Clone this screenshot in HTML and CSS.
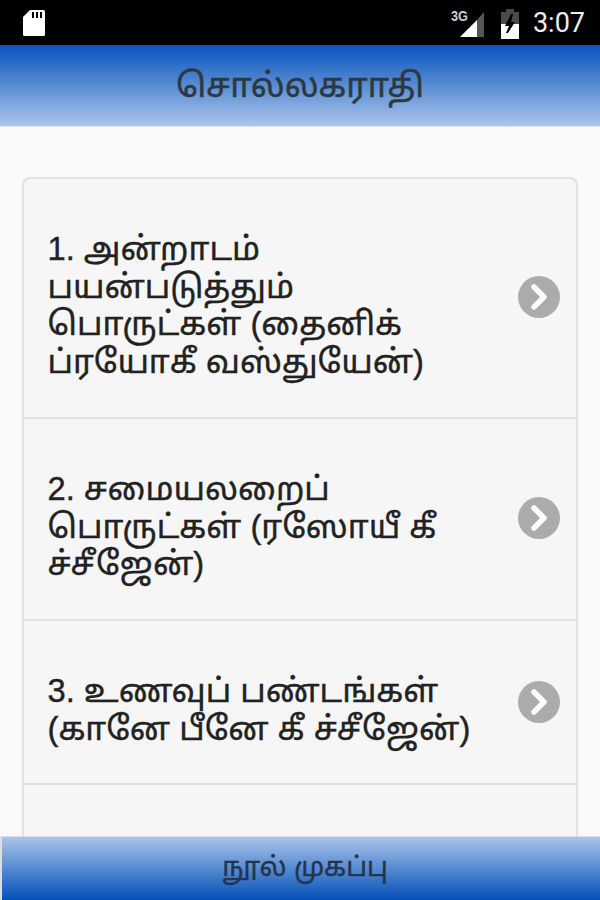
FILE: index.html
```html
<!DOCTYPE html>
<html lang="ta">
<head>
<meta charset="utf-8">
<title>சொல்லகராதி</title>
<link rel="stylesheet" href="styles.css">
</head>
<body>
<div class="status">
  <svg class="sd" width="24" height="28" viewBox="0 0 24 28"><path fill="#fff" d="M8 1H21.500Q23 1 23 2.500V25.500Q23 27 21.500 27H2.500Q1 27 1 25.500V8Z"/><path fill="#000" d="M10 3h2v6h-2zM14 3h2v6h-2zM18 3h2v6h-2z"/></svg>
  <div class="status-right">
    <svg class="signal" width="34" height="30" viewBox="0 0 34 30"><path fill="#fff" d="M9 28L26 11V28Z"/><path fill="#555" d="M26 11L33 3V28H26Z"/><text x="0" y="12" class="net" textLength="17" lengthAdjust="spacingAndGlyphs">3G</text></svg>
    <svg class="battery" width="20" height="30" viewBox="0 0 20 30"><path fill="#4a4a4a" d="M6 0H14V3H19V15H1V3H6Z"/><path fill="#fff" d="M1 15H19V30H1Z"/><path fill="#000" d="M11 5L5 17H9L6 24L8 24L15 13H11L13 5Z"/></svg>
    <span class="clock">3:07</span>
  </div>
</div>
<header class="head"><h1>சொல்லகராதி</h1></header>
<main class="content">
  <ul class="list">
    <li class="row"><span class="label">1. அன்றாடம் பயன்படுத்தும் பொருட்கள் (தைனிக் ப்ரயோகீ வஸ்துயேன்)</span><svg class="arrow" viewBox="0 0 42 42"><circle cx="21" cy="21" r="21" fill="#ababab"/><path d="M16 11L26 21L16 31" fill="none" stroke="#fff" stroke-width="5.500" stroke-linecap="round" stroke-linejoin="round"/></svg></li>
    <li class="row"><span class="label">2. சமையலறைப் பொருட்கள் (ரஸோயீ கீ ச்சீஜேன்)</span><svg class="arrow" viewBox="0 0 42 42"><circle cx="21" cy="21" r="21" fill="#ababab"/><path d="M16 11L26 21L16 31" fill="none" stroke="#fff" stroke-width="5.500" stroke-linecap="round" stroke-linejoin="round"/></svg></li>
    <li class="row"><span class="label">3. உணவுப் பண்டங்கள் (கானே பீனே கீ ச்சீஜேன்)</span><svg class="arrow" viewBox="0 0 42 42"><circle cx="21" cy="21" r="21" fill="#ababab"/><path d="M16 11L26 21L16 31" fill="none" stroke="#fff" stroke-width="5.500" stroke-linecap="round" stroke-linejoin="round"/></svg></li>
    <li class="row row-empty"></li>
  </ul>
</main>
<footer class="foot"><span>நூல் முகப்பு</span></footer>
</body>
</html>
```
FILE: styles.css
```css
* { box-sizing: border-box; }
html, body { margin: 0; padding: 0; }
body {
  width: 600px;
  height: 900px;
  overflow: hidden;
  display: flex;
  flex-direction: column;
  background: #f9f9f9;
  font-family: "Liberation Sans", "Noto Sans", "Noto Sans Tamil", sans-serif;
  color: #222;
}
.status {
  flex: 0 0 45px;
  height: 45px;
  background: #000;
  display: flex;
  align-items: center;
  justify-content: space-between;
  padding: 0 15px 0 22px;
}
.status-right { display: flex; align-items: center; }
.signal { margin-right: 15px; margin-top: 2px; overflow: visible; }
.net { font-family: "Liberation Sans", sans-serif; font-size: 14px; font-weight: 700; fill: #ccc; }
.battery { margin-right: 13px; margin-top: 2px; }
.clock { font-family: Roboto, sans-serif; font-size: 27px; color: #eee; line-height: 30px; }
.head {
  flex: 0 0 82px;
  height: 82px;
  background: linear-gradient(#0753bd, #aac6ea);
  border-bottom: 1px solid #e4e4e4;
  display: flex;
  align-items: center;
  justify-content: center;
}
.head h1 {
  margin: 0;
  font-size: 33.500px;
  font-weight: 400;
  color: #2f3842;
  line-height: 38px;
  -webkit-text-stroke: 0.5px #2f3842;
}
.content {
  flex: 1 1 0;
  min-height: 0;
  overflow: hidden;
  padding: 50px 22px 0;
}
.list {
  list-style: none;
  margin: 0;
  padding: 0;
  background: #f6f6f6;
  border: 2px solid #e2e2e2;
  border-radius: 8px;
}
.row {
  display: flex;
  align-items: center;
  justify-content: space-between;
  padding: 37px 16px 36px 23.500px;
  border-bottom: 2px solid #e2e2e2;
  font-size: 32.700px;
  line-height: 37.700px;
  color: #222;
  -webkit-text-stroke: 0.4px #222;
}
.row:last-child { border-bottom: 0; }
.label { width: 428px; padding-top: 14px; }
.arrow { flex: 0 0 42px; width: 42px; height: 42px; margin-bottom: 2px; }
.row-empty { height: 200px; }
.foot {
  flex: 0 0 64px;
  height: 64px;
  background: linear-gradient(#a9c5ea, #0450b8);
  border-top: 1px solid #ddd;
  border-left: 2px solid #ddd;
  display: flex;
  align-items: center;
  justify-content: center;
  padding-left: 8px;
  font-size: 26.700px;
  color: #22354c;
  -webkit-text-stroke: 0.4px #22354c;
}
```
